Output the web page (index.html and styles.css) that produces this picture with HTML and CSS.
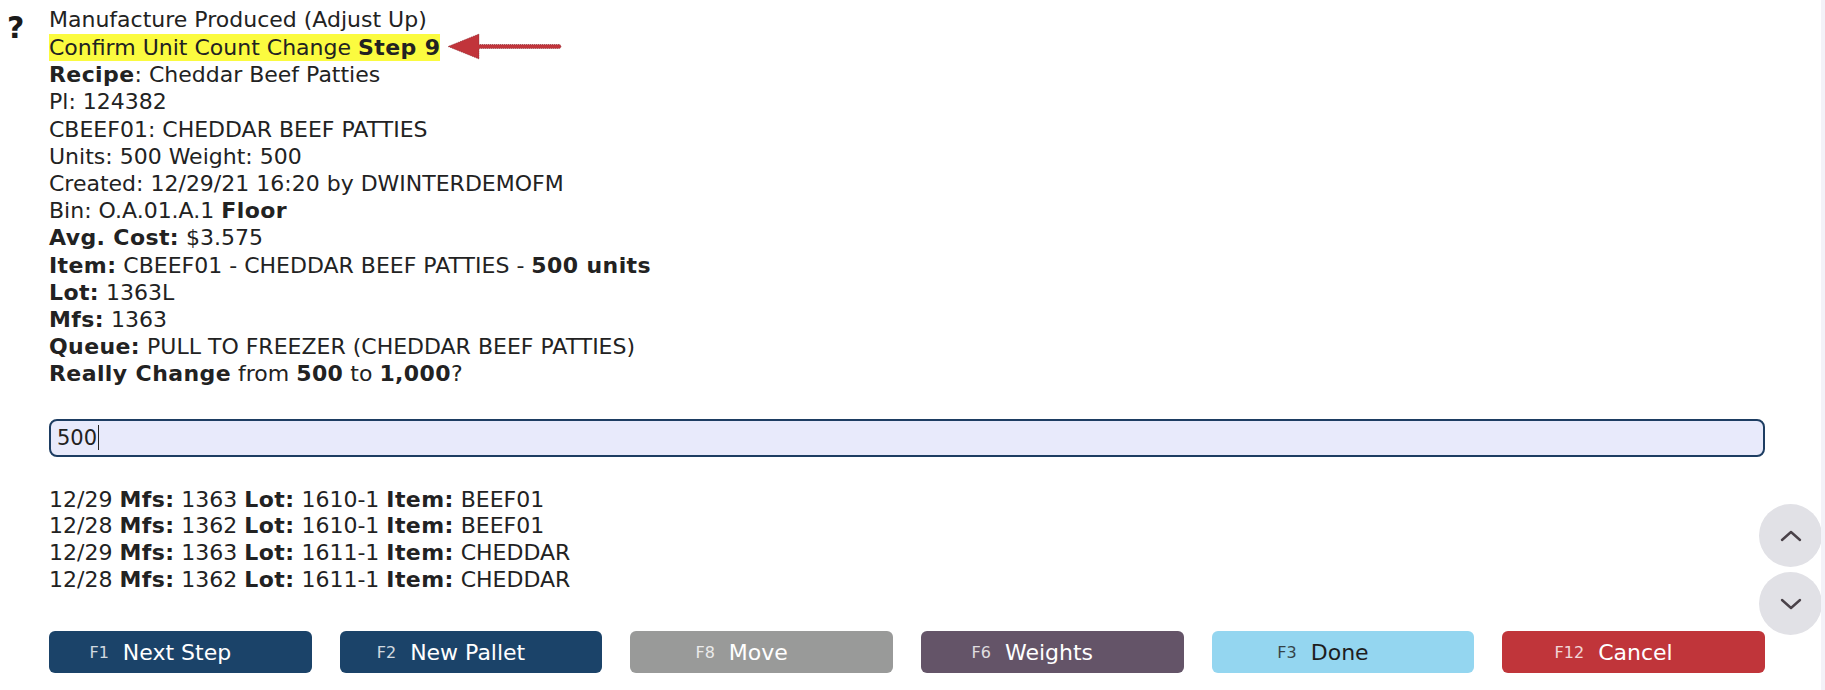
FILE: index.html
```html
<!DOCTYPE html>
<html lang="en">
<head>
<meta charset="utf-8">
<title>Confirm Unit Count Change</title>
<link rel="stylesheet" href="styles.css">
</head>
<body>
<div class="page">
  <div class="help">?</div>
  <div class="main">
    <div class="info">
      <div>Manufacture Produced (Adjust Up)</div>
      <div class="title-row"><span class="hl">Confirm Unit Count Change <b>Step 9</b></span><svg class="arrow" width="118" height="28" viewBox="0 0 118 28"><path d="M113 11.5 L33 11.5 L33 1 L2 13.5 L33 26 L33 15.5 L113 15.5 A2 2 0 0 0 113 11.5 Z" fill="#c1343b" stroke="#7a2228" stroke-width="0.6" stroke-dasharray="1 1"/></svg></div>
      <div><b>Recipe</b>: Cheddar Beef Patties</div>
      <div>Pl: 124382</div>
      <div>CBEEF01: CHEDDAR BEEF PATTIES</div>
      <div>Units: 500 Weight: 500</div>
      <div>Created: 12/29/21 16:20 by DWINTERDEMOFM</div>
      <div>Bin: O.A.01.A.1 <b>Floor</b></div>
      <div><b>Avg. Cost:</b> $3.575</div>
      <div><b>Item:</b> CBEEF01 - CHEDDAR BEEF PATTIES - <b>500 units</b></div>
      <div><b>Lot:</b> 1363L</div>
      <div><b>Mfs:</b> 1363</div>
      <div><b>Queue:</b> PULL TO FREEZER (CHEDDAR BEEF PATTIES)</div>
      <div><b>Really Change</b> from <b>500</b> to <b>1,000</b>?</div>
    </div>
    <div class="entry" role="textbox">500<span class="caret"></span></div>
    <div class="history">
      <div>12/29 <b>Mfs:</b> 1363 <b>Lot:</b> 1610-1 <b>Item:</b> BEEF01</div>
      <div>12/28 <b>Mfs:</b> 1362 <b>Lot:</b> 1610-1 <b>Item:</b> BEEF01</div>
      <div>12/29 <b>Mfs:</b> 1363 <b>Lot:</b> 1611-1 <b>Item:</b> CHEDDAR</div>
      <div>12/28 <b>Mfs:</b> 1362 <b>Lot:</b> 1611-1 <b>Item:</b> CHEDDAR</div>
    </div>
    <div class="actions">
      <button class="btn btn-navy"><span class="key">F1</span>Next Step</button>
      <button class="btn btn-navy"><span class="key">F2</span>New Pallet</button>
      <button class="btn btn-gray"><span class="key">F8</span>Move</button>
      <button class="btn btn-purple"><span class="key">F6</span>Weights</button>
      <button class="btn btn-sky"><span class="key">F3</span>Done</button>
      <button class="btn btn-red"><span class="key">F12</span>Cancel</button>
    </div>
  </div>
</div>
<div class="scroll-btns">
  <div class="circle"><svg width="24" height="14" viewBox="0 0 24 14"><path d="M3 11 L12 3 L21 11" fill="none" stroke="#4a4249" stroke-width="2.4" stroke-linecap="round" stroke-linejoin="round"/></svg></div>
  <div class="circle"><svg width="24" height="14" viewBox="0 0 24 14"><path d="M3 3 L12 11 L21 3" fill="none" stroke="#4a4249" stroke-width="2.4" stroke-linecap="round" stroke-linejoin="round"/></svg></div>
</div>
<div class="edge"></div>
</body>
</html>
```

FILE: styles.css
```css
html, body {
  margin: 0;
  padding: 0;
  background: #ffffff;
}
body {
  font-family: "DejaVu Sans", sans-serif;
  font-size: 22px;
  color: #222222;
}
b {
  letter-spacing: 0.4px;
}
.page {
  display: flex;
  padding: 6px 60px 0 7px;
}
.help {
  width: 42px;
  flex: none;
  font-family: "DejaVu Sans", sans-serif;
  font-weight: bold;
  font-size: 30px;
  line-height: 30px;
  padding-top: 7px;
  color: #1a1a1a;
}
.main {
  flex: 1;
  min-width: 0;
}
.info {
  line-height: 27.2px;
}
.title-row {
  display: flex;
  align-items: center;
}
.hl {
  background: #fbfb3f;
}
.arrow {
  margin-left: 6px;
  display: block;
}
.entry {
  margin-top: 31px;
  height: 38px;
  box-sizing: border-box;
  border: 2px solid #1d3d62;
  border-radius: 8px;
  background: #e8eafb;
  padding: 0 6px;
  display: flex;
  align-items: center;
  font-size: 21px;
}
.caret {
  display: inline-block;
  width: 1px;
  height: 25px;
  background: #222;
  margin-left: 1px;
}
.history {
  margin-top: 30px;
  line-height: 26.7px;
}
.actions {
  margin-top: 38px;
  display: grid;
  grid-template-columns: repeat(6, 1fr);
  column-gap: 28px;
}
.btn {
  height: 42px;
  border: none;
  border-radius: 6px;
  font-family: "DejaVu Sans", sans-serif;
  font-size: 22px;
  color: #ffffff;
  display: flex;
  align-items: center;
  justify-content: center;
  padding: 0 40px 0 0;
}
.key {
  font-size: 16px;
  margin-right: 14px;
  opacity: 0.8;
}
.btn-navy { background: #1b4369; }
.btn-gray { background: #999a99; }
.btn-purple { background: #645468; }
.btn-sky { background: #94d6f0; color: #1e1e1e; }
.btn-red { background: #c0353a; }
.scroll-btns {
  position: fixed;
  right: 3px;
  top: 504px;
  display: flex;
  flex-direction: column;
  gap: 5px;
}
.circle {
  width: 63px;
  height: 63px;
  border-radius: 50%;
  background: #e1e1e6;
  display: flex;
  align-items: center;
  justify-content: center;
}
.edge {
  position: fixed;
  right: 0;
  top: 0;
  bottom: 0;
  width: 4px;
  background: #f3f2f8;
}
```
